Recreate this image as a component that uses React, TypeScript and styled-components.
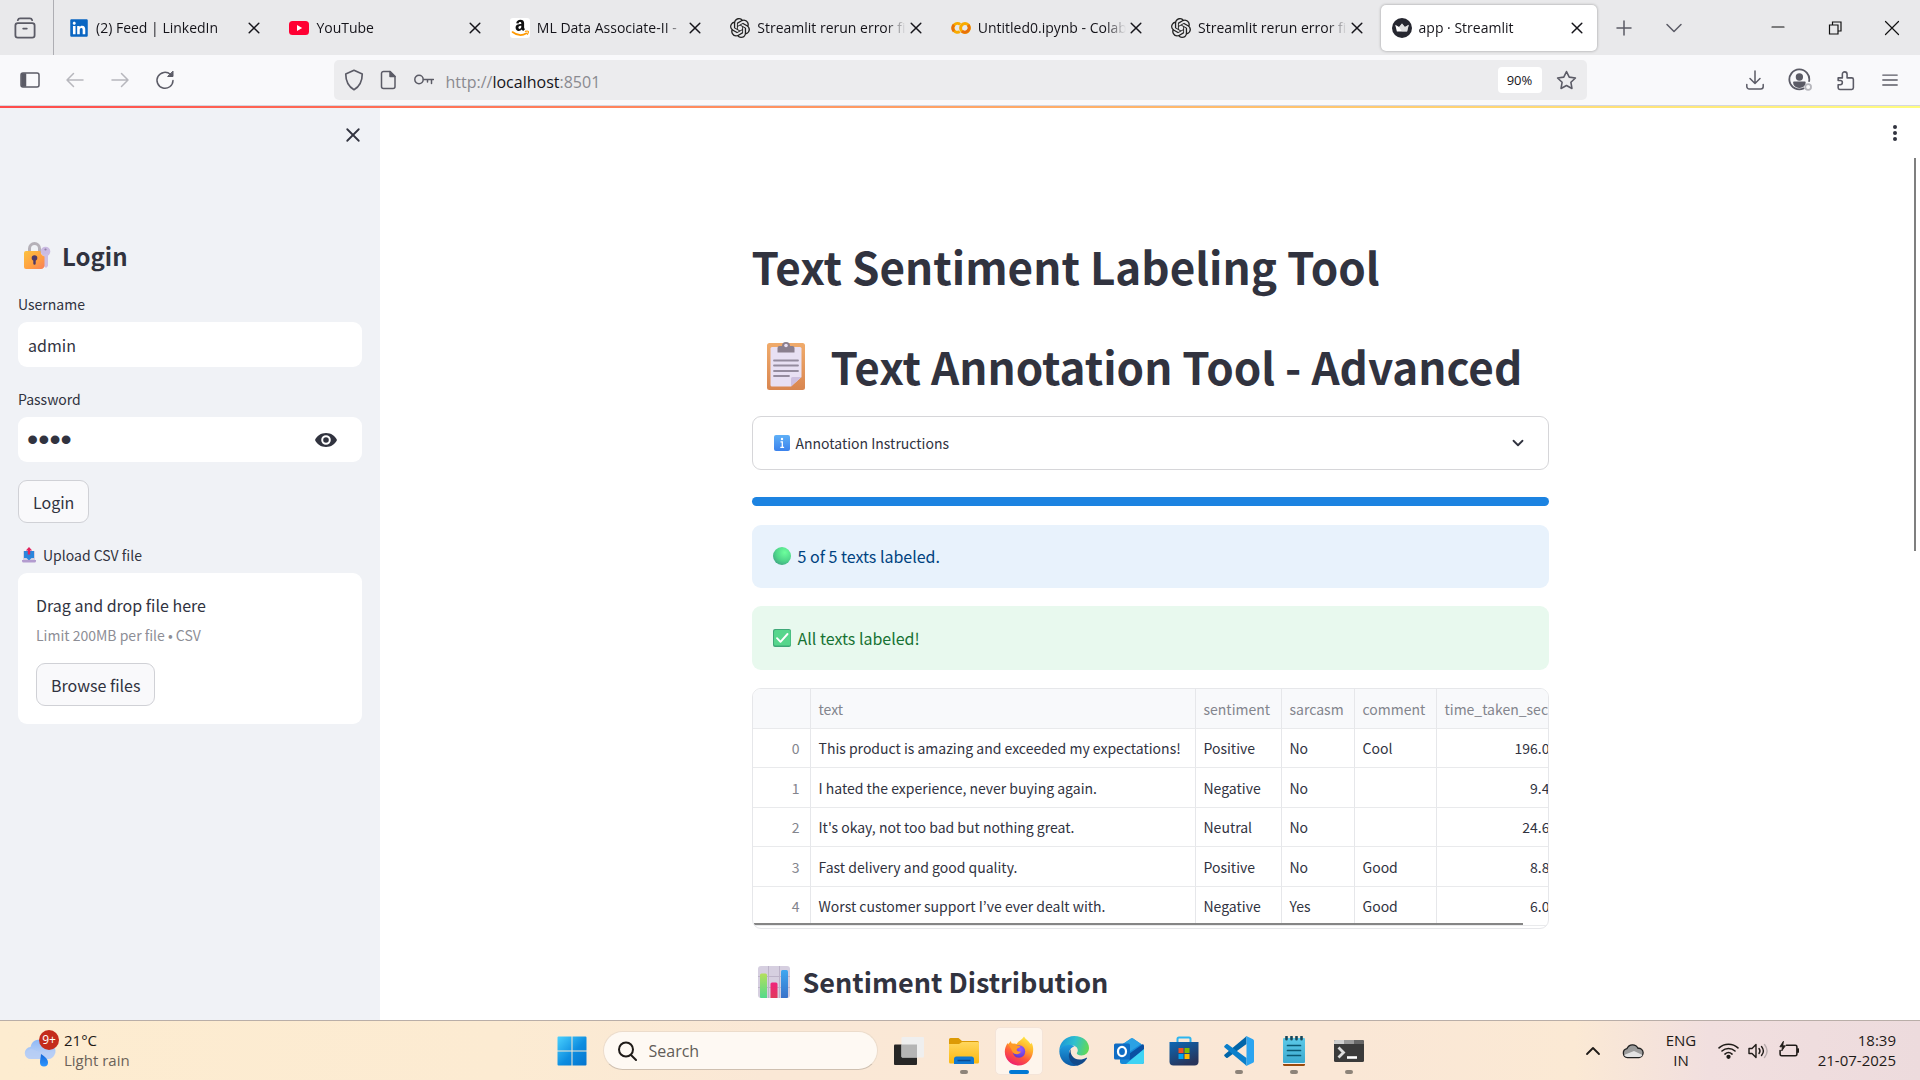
import React from "react";
import styled, { createGlobalStyle, css } from "styled-components";
import { FaLinkedin } from "react-icons/fa";
import { SiOpenai } from "react-icons/si";

const pageFont = `"Noto Sans CJK KR", "Noto Sans", sans-serif`;
const systemFont = `"Open Sans", "Noto Sans", sans-serif`;

const GlobalStyle = createGlobalStyle`
  *, *::before, *::after { box-sizing: border-box; }
  body { margin: 0; font-family: ${pageFont}; color: #31333f; background: #fff; }
  button, input { font: inherit; color: inherit; }
  svg { display: block; flex: none; }
  h1, h2, h3, p { margin: 0; }
`;

/* ---------- shell ---------- */

const Screen = styled.div`
  display: flex;
  flex-direction: column;
  height: 100vh;
  overflow: hidden;
`;

const IconButton = styled.button<{ $width?: number; $height?: number; $color?: string }>`
  display: flex;
  align-items: center;
  justify-content: center;
  flex: none;
  width: ${(p) => p.$width ?? 36}px;
  height: ${(p) => p.$height ?? 36}px;
  padding: 0;
  border: 0;
  background: transparent;
  color: ${(p) => p.$color ?? "#5b5b66"};
`;

/* ---------- tab strip ---------- */

const TabStrip = styled.header`
  display: flex;
  align-items: center;
  height: 55px;
  flex: none;
  background: #e9e9eb;
  font-family: ${systemFont};
`;

const RecentCell = styled.div`
  display: flex;
  align-items: center;
  justify-content: center;
  width: 54px;
  height: 100%;
  padding-right: 4px;
  border-right: 1px solid #aeaeb3;
`;

const TabList = styled.div`
  display: flex;
  gap: 4px;
  padding: 0 2px 0 4px;
  flex: 0 1 1545px;
  min-width: 0;
`;

const Tab = styled.div<{ $active?: boolean }>`
  display: flex;
  align-items: center;
  flex: 1 1 0;
  min-width: 0;
  height: 46px;
  padding: 0 10px 0 11px;
  border-radius: 5px;
  ${(p) =>
    p.$active &&
    css`
      background: #fff;
      box-shadow: 0 0 3px rgba(0, 0, 0, 0.35);
    `}
`;

const TabTitle = styled.span`
  flex: 1;
  min-width: 0;
  margin-left: 7px;
  overflow: hidden;
  white-space: nowrap;
  font-size: 14px;
  line-height: 20px;
  color: #15141a;
  mask-image: linear-gradient(to right, #000 calc(100% - 20px), transparent);
`;

const StripSpacer = styled.div`
  flex: 1;
`;

/* ---------- toolbar ---------- */

const Toolbar = styled.nav`
  display: grid;
  grid-template-columns: 1fr minmax(0, 1253px) 1fr;
  align-items: center;
  height: 51px;
  flex: none;
  background: #f9f9fb;
  border-bottom: 1px solid #d5d7e0;
  font-family: ${systemFont};
`;

const ToolGroup = styled.div<{ $end?: boolean }>`
  display: flex;
  align-items: center;
  gap: 9px;
  padding: 0 12px;
  justify-content: ${(p) => (p.$end ? "flex-end" : "flex-start")};
`;

const AddressBar = styled.div`
  display: flex;
  align-items: center;
  height: 40px;
  padding: 0 2px;
  border-radius: 5px;
  background: #ececee;
`;

const Address = styled.div`
  flex: 1;
  margin-left: 4px;
  padding-top: 3px;
  font-size: 16px;
  line-height: 24px;
  color: #8a8a90;
`;

const Host = styled.span`
  color: #15141a;
`;

const ZoomBadge = styled.button`
  width: 44px;
  height: 26px;
  margin-right: 7px;
  padding: 0;
  border: 0;
  border-radius: 4px;
  background: #fff;
  color: #15141a;
  font-size: 13px;
`;

const Decoration = styled.div`
  height: 2px;
  flex: none;
  background: linear-gradient(90deg, #ff4b4b, #fffd80);
`;

/* ---------- application ---------- */

const Body = styled.div`
  display: flex;
  flex: 1;
  min-height: 0;
`;

const Sidebar = styled.aside`
  width: 380px;
  flex: none;
  padding: 0 18px;
  background: #f0f2f6;
  overflow: hidden;
`;

const SidebarHeader = styled.div`
  display: flex;
  justify-content: flex-end;
  height: 132px;
  padding-top: 9px;
  margin-right: -9px;
`;

const Form = styled.form`
  display: flex;
  flex-direction: column;
  align-items: flex-start;
  gap: 18px;
`;

const SidebarHeading = styled.h2`
  display: flex;
  align-items: center;
  gap: 11px;
  padding-left: 5px;
  font-size: 24px;
  line-height: 32px;
  font-weight: 600;
`;

const Field = styled.div`
  display: flex;
  flex-direction: column;
  gap: 7px;
  width: 100%;
  padding-top: 3px;
`;

const FieldLabel = styled.label`
  display: flex;
  align-items: center;
  gap: 7px;
  font-size: 14px;
  line-height: 22px;
`;

const InputShell = styled.div`
  display: flex;
  align-items: center;
  height: 45px;
  padding-right: 18px;
  border-radius: 9px;
  background: #fff;
`;

const TextInput = styled.input`
  flex: 1;
  min-width: 0;
  height: 100%;
  padding: 0 10px;
  border: 0;
  outline: 0;
  background: transparent;
  font-size: 16px;
  &[type="password"] {
    padding: 0 9px;
    font-family: "Liberation Sans", sans-serif;
    font-size: 32px;
  }
`;

const Button = styled.button`
  height: 43px;
  padding: 0 14px;
  border: 1px solid #d0d1d6;
  border-radius: 9px;
  background: #f9f9fb;
  font-size: 16px;
  line-height: 24px;
`;

const Dropzone = styled.section`
  display: flex;
  flex-direction: column;
  align-items: flex-start;
  padding: 20px 18px 18px;
  border-radius: 9px;
  background: #fff;
`;

const DropTitle = styled.span`
  font-size: 16px;
  line-height: 24px;
`;

const DropHint = styled.small`
  margin: 7px 0 17px;
  font-size: 14px;
  line-height: 22px;
  color: #8d8e96;
`;

const HiddenFile = styled.input`
  display: none;
`;

const Main = styled.main`
  position: relative;
  flex: 1;
  min-width: 0;
  padding: 105px 24px 0;
  overflow: hidden;
`;

const MenuAnchor = styled.div`
  position: absolute;
  top: 7px;
  right: 7px;
`;

const PageScroll = styled.div`
  position: absolute;
  top: 50px;
  right: 4px;
  width: 2px;
  height: 393px;
  background: #7f7f7f;
`;

const Column = styled.div`
  display: flex;
  flex-direction: column;
  gap: 18px;
  max-width: 797px;
  margin: 0 auto;
`;

const Title = styled.h1`
  display: flex;
  align-items: center;
  gap: 25px;
  padding-top: 23px;
  font-size: 44px;
  line-height: 60px;
  font-weight: 700;
  white-space: nowrap;
`;

const Titles = styled.div`
  display: flex;
  flex-direction: column;
  gap: 17px;
  padding-bottom: 2px;
`;

const TitleIcon = styled.span`
  padding-left: 14px;
`;

const Expander = styled.button`
  display: flex;
  align-items: center;
  gap: 6px;
  height: 54px;
  padding: 0 21px;
  border: 1px solid #d6d6d9;
  border-radius: 9px;
  background: #fff;
  font-size: 14px;
  line-height: 22px;
  text-align: left;
`;

const ExpanderLabel = styled.span`
  flex: 1;
`;

const ProgressWrap = styled.div`
  padding: 9px 0 1px;
`;

const ProgressBar = styled.div`
  height: 9px;
  border-radius: 9px;
  background: #1c83e1;
`;

const Alert = styled.div<{ $tone: "info" | "success" }>`
  display: flex;
  align-items: center;
  gap: 7px;
  min-height: ${(p) => (p.$tone === "info" ? 63 : 64)}px;
  padding: 0 21px 1px;
  border-radius: 9px;
  font-size: 16px;
  line-height: 24px;
  background: ${(p) => (p.$tone === "info" ? "#e8f2fc" : "#e8f9ee")};
  color: ${(p) => (p.$tone === "info" ? "#004280" : "#177233")};
`;

const Frame = styled.div`
  position: relative;
  height: 241px;
  border: 1px solid #e6e7ea;
  border-radius: 9px;
  overflow: hidden;
`;

const FrameScroll = styled.div`
  position: absolute;
  left: 1px;
  right: 25px;
  bottom: 3px;
  height: 2px;
  background: #858585;
`;

const Table = styled.table`
  width: 806px;
  table-layout: fixed;
  border-collapse: separate;
  border-spacing: 0;
  font-size: 14px;
  line-height: 20px;
`;

const Row = styled.tr<{ $height: number }>`
  height: ${(p) => p.$height}px;
`;

const Cell = styled.td<{ $align?: "right"; $muted?: boolean }>`
  padding: 0 ${(p) => (p.$muted ? 10 : 8)}px;
  border-right: 1px solid #e6e7ea;
  border-bottom: 1px solid #e9eaec;
  text-align: ${(p) => p.$align ?? "left"};
  white-space: nowrap;
  color: ${(p) => (p.$muted ? "#83858d" : "#31333f")};
`;

const HeadCell = styled(Cell).attrs({ as: "th" })`
  background: #f8f9fb;
  color: #83858d;
  font-weight: 400;
`;

const SectionHeading = styled.h3`
  display: flex;
  align-items: center;
  gap: 13px;
  padding: 16px 0 0 6px;
  font-size: 27px;
  line-height: 38px;
  font-weight: 600;
`;

/* ---------- taskbar ---------- */

const Taskbar = styled.footer`
  display: grid;
  grid-template-columns: 1fr auto 1fr;
  align-items: center;
  height: 60px;
  flex: none;
  border-top: 1px solid #b9aea8;
  background: linear-gradient(90deg, #fdecd0 0%, #fcebd2 26%, #fae8d6 40%, #fae7d6 70%, #fbe9d4 82%, #f1dfdf 89%, #eddbdd 100%);
  font-family: ${systemFont};
  color: #1f1b18;
`;

const Weather = styled.button`
  display: flex;
  align-items: flex-start;
  gap: 7px;
  justify-self: start;
  padding: 0 0 0 24px;
  border: 0;
  background: transparent;
  text-align: left;
`;

const WeatherIcon = styled.span`
  position: relative;
  width: 33px;
  height: 38px;
`;

const Badge = styled.span`
  position: absolute;
  top: 0;
  right: -2px;
  width: 20px;
  height: 20px;
  border-radius: 50%;
  background: #c42b1c;
  color: #fff;
  font-size: 12px;
  line-height: 20px;
  text-align: center;
`;

const Lines = styled.span<{ $align?: string }>`
  display: flex;
  flex-direction: column;
  padding-bottom: 2px;
  font-size: 15px;
  line-height: 20px;
  text-align: ${(p) => p.$align ?? "left"};
`;

const Dim = styled.span`
  color: #6b6259;
`;

const Apps = styled.div`
  display: flex;
  align-items: center;
  gap: 7px;
`;

const AppButton = styled.button<{ $active?: boolean; $running?: boolean }>`
  position: relative;
  display: flex;
  align-items: center;
  justify-content: center;
  width: 48px;
  height: 48px;
  padding: 0;
  border: 1px solid transparent;
  border-radius: 5px;
  background: transparent;
  ${(p) =>
    p.$active &&
    css`
      border-color: #f4e4d8;
      background: #fef5ec;
    `}
  ${(p) =>
    (p.$active || p.$running) &&
    css`
      &::after {
        content: "";
        position: absolute;
        bottom: 0;
        width: ${p.$active ? 20 : 8}px;
        height: 4px;
        border-radius: 2px;
        background: ${p.$active ? "#0078d4" : "#8d8379"};
      }
    `}
`;

const SearchPill = styled.label`
  display: flex;
  align-items: center;
  gap: 12px;
  width: 275px;
  height: 39px;
  padding: 0 13px;
  border: 1px solid #ecdccb;
  border-bottom-color: #cfc0b0;
  border-radius: 20px;
  background: #fef9f3;
`;

const SearchInput = styled.input`
  flex: 1;
  min-width: 0;
  padding: 0;
  border: 0;
  outline: 0;
  background: transparent;
  font-size: 16px;
  &::placeholder {
    color: #625c57;
    opacity: 1;
  }
`;

const Tray = styled.div`
  display: flex;
  align-items: center;
  justify-self: end;
  padding-right: 24px;
`;

const TrayItem = styled.button<{ $width: number; $align?: string }>`
  display: flex;
  align-items: center;
  justify-content: ${(p) => (p.$align === "right" ? "flex-end" : "center")};
  width: ${(p) => p.$width}px;
  height: 48px;
  padding: 0;
  border: 0;
  background: transparent;
`;

/* ---------- line icons ---------- */

const Line = ({ size = 20, w = 1.5, children }: { size?: number; w?: number; children: React.ReactNode }) => (
  <svg width={size} height={size} viewBox="0 0 20 20" fill="none" stroke="currentColor" strokeWidth={w} strokeLinecap="round" strokeLinejoin="round">
    {children}
  </svg>
);

const CloseIcon = ({ size = 20, w = 1.5 }) => (
  <Line size={size} w={w}><path d="M5.2 5.2l9.6 9.6M14.8 5.2l-9.6 9.6" /></Line>
);

/* ---------- picture icons ---------- */

const YoutubeLogo = () => (
  <svg width="20" height="20" viewBox="0 0 20 20">
    <rect y="3" width="20" height="14" rx="3.5" fill="#ff0033" />
    <path d="M8 7l5.2 3L8 13z" fill="#fff" />
  </svg>
);

const LinkedInLogo = () => (
  <svg width="20" height="20" viewBox="0 0 20 20">
    <rect x="2" y="2" width="16" height="16" fill="#fff" />
    <FaLinkedin x="0" y="0" width={20} height={20} size={20} color="#0a66c2" />
  </svg>
);

const AmazonLogo = () => (
  <svg width="20" height="20" viewBox="0 0 20 20">
    <rect width="20" height="20" rx="3" fill="#fff" />
    <path d="M6.2 5.2c.3-2.200 2-3.400 4.200-3.400 2.400 0 3.700 1.200 3.700 3.300v4.200c0 .9.300 1.300.9 2l-1.900 1.600c-.6-.4-1-.9-1.300-1.400-.8.900-1.700 1.400-3 1.400-1.900 0-3.200-1.200-3.200-3.100 0-2.700 2.200-3.700 5.700-3.700V5.400c0-.9-.4-1.400-1.200-1.400-.8 0-1.300.4-1.500 1.400zM11.300 7.800c-1.900 0-2.900.5-2.900 1.800 0 .8.500 1.300 1.200 1.300 1.100 0 1.700-1 1.700-2.300z" fill="#111" />
    <path d="M2.500 14c4.600 3.600 9.600 4 14 1.300" fill="none" stroke="#ff9900" strokeWidth="1.600" strokeLinecap="round" />
    <path d="M15.400 13.300c1.200-.3 2.500-.4 2.900 0 .3.600-.1 1.900-.8 3" fill="none" stroke="#ff9900" strokeWidth="1.200" strokeLinecap="round" />
  </svg>
);

const ColabLogo = () => (
  <svg width="20" height="20" viewBox="0 0 20 20" fill="none" strokeWidth="3">
    <path d="M9.200 6.400A4.400 4.400 0 1 0 8.800 13.600" stroke="#f9ab00" />
    <path d="M3 13.100A4.400 4.400 0 0 1 3 6.900" stroke="#e8710a" />
    <circle cx="14" cy="10" r="4.400" stroke="#f9ab00" />
    <path d="M17.100 6.900A4.400 4.400 0 0 1 10.900 13.100" stroke="#e8710a" />
  </svg>
);

const CrownLogo = () => (
  <svg width="20" height="20" viewBox="0 0 20 20">
    <circle cx="10" cy="10" r="10" fill="#262730" />
    <path d="M3.200 6.800l3.900 2.300L10 5.400l2.900 3.700 3.900-2.300-1.700 6.700H4.900z" fill="#fff" />
    <path d="M10 5.400l2.900 3.700 3.900-2.300-1.700 6.700H10l-3-4.400z" fill="#c9c9cc" opacity=".6" />
  </svg>
);

const LockKeyIcon = () => (
  <svg width="28" height="28" viewBox="0 0 28 28">
    <defs>
      <linearGradient id="lockBody" x1="0" y1="0" x2="1" y2="1">
        <stop offset="0" stopColor="#fcc23f" /><stop offset=".6" stopColor="#ff9e42" /><stop offset="1" stopColor="#f77f5b" />
      </linearGradient>
    </defs>
    <circle cx="22.500" cy="9.500" r="4.800" fill="#cbbbe2" />
    <circle cx="22.500" cy="7.500" r="1.100" fill="#8f80a8" />
    <path d="M21 12h4v12l-2 2-2-2z" fill="#cdbfe3" />
    <path d="M6.500 11V6.500a5 5 0 0 1 10 0V11" fill="none" stroke="#b5b1b8" strokeWidth="3" />
    <path d="M3 9h14.500c0 3 1.500 4.500 4 5.500V23a3.500 3.500 0 0 1-3.500 4H3a2 2 0 0 1-2-2V11a2 2 0 0 1 2-2z" fill="url(#lockBody)" />
    <circle cx="11.500" cy="16" r="2.800" fill="#4d3a68" />
    <path d="M10.300 17h2.400v4.500a1.200 1.200 0 0 1-2.400 0z" fill="#4d3a68" />
  </svg>
);

const UploadTrayIcon = () => (
  <svg width="14" height="16" viewBox="0 0 14 16">
    <path d="M1 4h12v9H1z" fill="#d5cfe0" />
    <path d="M2 4h10v7H9.500L7.500 13h-1l-2-2H2z" fill="#2a86dc" />
    <path d="M0 13h14v1a1.500 1.500 0 0 1-1.500 1.500h-11A1.500 1.500 0 0 1 0 14z" fill="#b39ccf" />
    <path d="M7 0l3.200 3.600H8.200V7.500H5.800V3.600H3.800z" fill="#e0245e" />
  </svg>
);

const ClipboardIcon = () => (
  <svg width="40" height="50" viewBox="0 0 40 50">
    <defs>
      <linearGradient id="board" x1="0" y1="0" x2="0" y2="1">
        <stop offset="0" stopColor="#f0ab6b" /><stop offset="1" stopColor="#d98650" />
      </linearGradient>
    </defs>
    <rect x="1" y="2" width="38" height="47" rx="2.500" fill="url(#board)" />
    <path d="M6 6h28a1.500 1.500 0 0 1 1.500 1.500V36L25 45.500H6A1.500 1.500 0 0 1 4.500 44V7.500A1.500 1.500 0 0 1 6 6z" fill="#e8e0f3" />
    <path d="M25 45.500V37.500A1.500 1.500 0 0 1 26.500 36h9z" fill="#cdbfdf" />
    <path d="M11.500 11.500V7a2 2 0 0 1 2-2H16a4 4 0 0 1 8 0h2.500a2 2 0 0 1 2 2v4.500z" fill="#8a7f8e" />
    <circle cx="20" cy="4.500" r="1.800" fill="#e8e0f3" />
    <path d="M8 19.500h24M8 24.500h24M8 30h24M8 35h15" stroke="#948b9e" strokeWidth="1.800" strokeLinecap="round" />
  </svg>
);

const InfoIcon = () => (
  <svg width="16" height="16" viewBox="0 0 16 16">
    <defs>
      <linearGradient id="infoFill" x1="0" y1="0" x2="0" y2="1">
        <stop offset="0" stopColor="#5fb0f7" /><stop offset="1" stopColor="#3b82ec" />
      </linearGradient>
    </defs>
    <rect width="16" height="16" rx="2" fill="url(#infoFill)" />
    <circle cx="8" cy="4" r="1.200" fill="#fff" />
    <path d="M6.500 6.800H8.300V12M6.300 12.300h3.800" fill="none" stroke="#fff" strokeWidth="1.300" />
  </svg>
);

const GreenCircleIcon = () => (
  <svg width="18" height="18" viewBox="0 0 18 18">
    <defs>
      <radialGradient id="ball" cx=".65" cy=".3" r=".8">
        <stop offset="0" stopColor="#6dff9c" /><stop offset=".6" stopColor="#4fd58a" /><stop offset="1" stopColor="#3fa283" />
      </radialGradient>
    </defs>
    <circle cx="9" cy="9" r="9" fill="url(#ball)" />
  </svg>
);

const CheckMarkIcon = () => (
  <svg width="18" height="18" viewBox="0 0 18 18">
    <rect width="18" height="18" rx="2" fill="#3fa878" />
    <rect x="1" y="1" width="16.500" height="15.500" rx="1.500" fill="#57d68c" />
    <path d="M4 9.200l3.500 3.600L14.500 5" fill="none" stroke="#fff" strokeWidth="1.900" strokeLinecap="round" strokeLinejoin="round" />
  </svg>
);

const ChartIcon = () => (
  <svg width="32" height="32" viewBox="0 0 32 32">
    <defs>
      <linearGradient id="barGreen" x1="0" y1="0" x2="0" y2="1"><stop offset="0" stopColor="#b4e05c" /><stop offset="1" stopColor="#54d98c" /></linearGradient>
      <linearGradient id="barRed" x1="0" y1="0" x2="0" y2="1"><stop offset="0" stopColor="#f0247c" /><stop offset="1" stopColor="#e03b5c" /></linearGradient>
      <linearGradient id="barBlue" x1="0" y1="0" x2="0" y2="1"><stop offset="0" stopColor="#3fa7f0" /><stop offset="1" stopColor="#3a72c9" /></linearGradient>
    </defs>
    <rect width="32" height="32" rx="3" fill="#d6cfe0" />
    <path d="M10.500 0v32M21.500 0v32M0 10.500h32M0 21.500h32" stroke="#bdb3c9" strokeWidth="1" />
    <path d="M2 9a1.500 1.500 0 0 1 1.500-1.500h4A1.500 1.500 0 0 1 9 9v23H3a1 1 0 0 1-1-1z" fill="url(#barGreen)" />
    <path d="M12.500 18A1.500 1.500 0 0 1 14 16.500h4a1.500 1.500 0 0 1 1.500 1.500v14h-7z" fill="url(#barRed)" />
    <path d="M23 5.500A1.500 1.500 0 0 1 24.500 4h4A1.500 1.500 0 0 1 30 5.500V31a1 1 0 0 1-1 1h-6z" fill="url(#barBlue)" />
  </svg>
);

const WeatherPicture = () => (
  <svg width="33" height="38" viewBox="0 0 33 38">
    <defs>
      <linearGradient id="cloud" x1="0" y1="0" x2="0" y2="1"><stop offset="0" stopColor="#8db8f7" /><stop offset="1" stopColor="#c9d8f5" /></linearGradient>
      <linearGradient id="drop" x1="0" y1="0" x2="0" y2="1"><stop offset="0" stopColor="#1467d8" /><stop offset="1" stopColor="#2f97ff" /></linearGradient>
    </defs>
    <path d="M7 29a6 6 0 0 1-.5-12A9 9 0 0 1 23 14a7.500 7.500 0 0 1 2 15z" fill="url(#cloud)" />
    <path d="M1.500 25a6 6 0 0 1 8-5.500c3 1.200 5 2.500 9 2.500 5 0 9 0 11.500-1 .5 5-2 8-5.500 8H7a6 6 0 0 1-5.500-4z" fill="#b7cdf5" opacity=".8" />
    <path d="M17 24c4 3 7 5 7 8.500a4 4 0 0 1-8 0c0-3 .8-5 1-8.500z" fill="url(#drop)" />
  </svg>
);

const WindowsLogo = () => (
  <svg width="30" height="30" viewBox="0 0 30 30">
    <defs>
      <linearGradient id="win" gradientUnits="userSpaceOnUse" x1="0" y1="0" x2="30" y2="30"><stop offset="0" stopColor="#4cd3ff" /><stop offset=".55" stopColor="#0d8de0" /><stop offset="1" stopColor="#0573cd" /></linearGradient>
    </defs>
    <path d="M1.500 .5h13v14H.5v-13a1 1 0 0 1 1-1zM15.500 .5h13a1 1 0 0 1 1 1v13h-14zM.5 15.500h14v14h-13a1 1 0 0 1-1-1zM15.500 15.500h14v13a1 1 0 0 1-1 1h-13z" fill="url(#win)" />
  </svg>
);

const TaskViewIcon = () => (
  <svg width="30" height="30" viewBox="0 0 30 30">
    <rect x="0" y="8.500" width="23" height="20.500" rx="1" fill="#262626" />
    <rect x="7.500" y="1" width="22.500" height="20.500" rx="1" fill="#efefef" />
    <path d="M7.500 8.500H23v13H8.500a1 1 0 0 1-1-1z" fill="#b5b5b5" />
  </svg>
);

const FolderIcon = () => (
  <svg width="30" height="30" viewBox="0 0 30 30">
    <defs><linearGradient id="folder" x1="0" y1="0" x2="0" y2="1"><stop offset="0" stopColor="#ffd75e" /><stop offset="1" stopColor="#fbb80f" /></linearGradient></defs>
    <path d="M0 3.500A1.500 1.500 0 0 1 1.500 2h8L13 5h15.500A1.500 1.500 0 0 1 30 6.500V10H0z" fill="#dc9a05" />
    <path d="M0 8h10l3-2h16a1 1 0 0 1 1 1v19a1.500 1.500 0 0 1-1.500 1.500h-27A1.500 1.500 0 0 1 0 26z" fill="url(#folder)" />
    <path d="M5 28v-5a2.500 2.500 0 0 1 2.500-2.500h15A2.500 2.500 0 0 1 25 23v5z" fill="#1078d1" />
    <path d="M8.500 24.500h13" stroke="#0b4a8f" strokeWidth="1.500" />
  </svg>
);

const FirefoxLogo = () => (
  <svg width="30" height="30" viewBox="0 0 30 30">
    <defs>
      <linearGradient id="fox" x1=".8" y1="0" x2=".3" y2="1"><stop offset="0" stopColor="#fff04a" /><stop offset=".35" stopColor="#ffb12a" /><stop offset=".65" stopColor="#ff5a3a" /><stop offset="1" stopColor="#ee1c70" /></linearGradient>
      <radialGradient id="globe" cx=".6" cy=".3" r=".8"><stop offset="0" stopColor="#9a5cff" /><stop offset="1" stopColor="#5a34c9" /></radialGradient>
    </defs>
    <path d="M20 .5c1.500 3 4.500 4 6.500 7.500.7-.2 1-.8 1-1.500C29 9.500 29.500 12 29 16c-.8 7.600-7 13.500-14.200 13.500C7 29.500.8 23.500.8 15.800c0-3.500 1.200-6.500 3-8.800l.4 1.500L6.800 5l1 3c1.500-.8 3.500-.8 5 0C14 5 17.500 4.500 20 .5z" fill="url(#fox)" />
    <circle cx="15" cy="15.500" r="6.200" fill="url(#globe)" />
    <path d="M4 8c3-1 6-.5 8 1.500 2 .2 3.500.2 4.500 1-1 1.500-3.500 1.500-4 3.500 1 1.500 2.500 1.800 4.500 1.500-1.500 3.500-6.500 3.500-8.500.5C7 13 6 10 4 8z" fill="#ff9a26" />
  </svg>
);

const EdgeLogo = () => (
  <svg width="30" height="30" viewBox="0 0 30 30">
    <defs>
      <linearGradient id="edgeTop" x1="0" y1=".3" x2="1" y2=".5"><stop offset="0" stopColor="#1b94d8" /><stop offset=".5" stopColor="#2fc0cf" /><stop offset="1" stopColor="#62d957" /></linearGradient>
      <linearGradient id="edgeSide" x1="0" y1="0" x2="0" y2="1"><stop offset="0" stopColor="#1f9de0" /><stop offset="1" stopColor="#0c59a4" /></linearGradient>
    </defs>
    <path d="M.3 15C.3 6.500 7 0 15.300 0 24 0 30 5.500 30 12c0 4.500-3.500 7.500-7.500 7.500-3 0-4.700-1-4.700-2.200 0-.8 1-1.200 1-3 0-3-3-5-6.800-5C6 9.300 1.500 12 .3 15z" fill="url(#edgeTop)" />
    <path d="M.3 15C1.500 10.500 6.500 8.500 11 8.800c2 .1 3.500.8 4.500 1.700-3.500.5-5.500 4-5.500 7.500 0 5 4 10.500 9.500 11.300-1.500.5-3 .7-4.500.7C6.500 30 .3 23.500.3 15z" fill="url(#edgeSide)" />
    <path d="M12 13c-1.500 4 1.500 10.500 8.500 10.500 3 0 5-.8 6.800-1.800.6-.2 1 .3.600.9C25.500 26.500 22 29 19 29.400 12.500 29 9 23 10 18c.3-2 1-3.800 2-5z" fill="#114a8b" />
  </svg>
);

const OutlookLogo = () => (
  <svg width="30" height="30" viewBox="0 0 30 30">
    <path d="M6 10L17 2.500a2 2 0 0 1 2 0L30 10v16a2 2 0 0 1-2 2H8a2 2 0 0 1-2-2z" fill="#1689d8" />
    <path d="M6 10L17 2.500a2 2 0 0 1 2 0L27 8 12 18z" fill="#2ba1e4" />
    <path d="M12 20L29 8l1 1.500V14L16 24z" fill="#0a4fa3" />
    <path d="M30 13v13a2 2 0 0 1-2 2H12z" fill="#3fd3f4" />
    <rect x="0" y="7.500" width="16" height="16" rx="1.500" fill="#0f6cc4" />
    <ellipse cx="8" cy="15.500" rx="4" ry="4.600" fill="none" stroke="#fff" strokeWidth="2.200" />
  </svg>
);

const StoreLogo = () => (
  <svg width="30" height="30" viewBox="0 0 30 30">
    <defs><linearGradient id="bag" x1="0" y1="0" x2=".5" y2="1"><stop offset="0" stopColor="#0c68b5" /><stop offset="1" stopColor="#27355c" /></linearGradient></defs>
    <path d="M8.500 7V3a1.500 1.500 0 0 1 1.500-1.500h10A1.500 1.500 0 0 1 21.500 3v4" fill="none" stroke="#2cb5ef" strokeWidth="2" />
    <path d="M.5 6h29v19.500a4 4 0 0 1-4 4h-21a4 4 0 0 1-4-4z" fill="url(#bag)" />
    <path d="M9.500 12h5v5h-5z" fill="#f25022" /><path d="M15.500 12h5v5h-5z" fill="#7fba00" />
    <path d="M9.500 18h5v5h-5z" fill="#00a4ef" /><path d="M15.500 18h5v5h-5z" fill="#ffb900" />
  </svg>
);

const CodeLogo = () => (
  <svg width="30" height="30" viewBox="0 0 30 30">
    <path d="M22.500.3L.6 18.600c-.6.500-.6 1.200 0 1.700l1.600 1.500c.5.400 1 .4 1.500 0L22.500 8z" fill="#0065a9" />
    <path d="M22.500 29.700L.6 11.400c-.6-.5-.6-1.200 0-1.700l1.600-1.500c.5-.4 1-.4 1.500 0L22.500 22z" fill="#0a7fcb" />
    <path d="M21.500.2c.4-.3.900-.2 1.300 0L29 3.200c.6.300 1 .9 1 1.600v20.400c0 .7-.4 1.300-1 1.600l-6.200 3c-.4.200-.9.300-1.300 0 .6.100 1-.3 1-.9V1.100c0-.6-.4-1-1-.9z" fill="#2ba4f0" />
  </svg>
);

const NotepadLogo = () => (
  <svg width="22" height="30" viewBox="0 0 22 30">
    <defs><linearGradient id="pad" x1="0" y1="0" x2="0" y2="1"><stop offset="0" stopColor="#5cc9e8" /><stop offset="1" stopColor="#3ba9cf" /></linearGradient></defs>
    <path d="M0 25h22v3.500a1.500 1.500 0 0 1-1.500 1.500h-19A1.500 1.500 0 0 1 0 28.500z" fill="#9a4a0c" />
    <path d="M0 25h22v3H0z" fill="#f2efec" />
    <rect y="2" width="22" height="25" rx="1" fill="url(#pad)" />
    <path d="M4.500 9.500h13M4.500 14.500h13M4.500 19.500h13" stroke="#0b5873" strokeWidth="1.700" strokeLinecap="round" />
    <path d="M3.500 .8v2.500M8.500 .8v2.500M13.500 .8v2.500M18.500 .8v2.500" stroke="#17475a" strokeWidth="2.600" strokeLinecap="round" />
  </svg>
);

const TerminalLogo = () => (
  <svg width="30" height="30" viewBox="0 0 30 30">
    <rect y="4" width="30" height="22" rx="1.500" fill="#3a3a3a" />
    <path d="M0 8V5.500A1.500 1.500 0 0 1 1.500 4H10v4z" fill="#cfcfcf" /><path d="M10 4h10v4H10z" fill="#999" /><path d="M20 4h8.500A1.500 1.500 0 0 1 30 5.500V8H20z" fill="#666" />
    <path d="M4.500 11.500l5 5-5 5" fill="none" stroke="#dcdcdc" strokeWidth="2.800" />
    <path d="M13 21.500h10" stroke="#fff" strokeWidth="2.600" />
  </svg>
);

/* ---------- data ---------- */

const tabs = [
  { title: "(2) Feed | LinkedIn", icon: <LinkedInLogo /> },
  { title: "YouTube", icon: <YoutubeLogo /> },
  { title: "ML Data Associate-II -", icon: <AmazonLogo /> },
  { title: "Streamlit rerun error fix", icon: <SiOpenai size={20} color="#222" /> },
  { title: "Untitled0.ipynb - Colab", icon: <ColabLogo /> },
  { title: "Streamlit rerun error fix", icon: <SiOpenai size={20} color="#222" /> },
  { title: "app · Streamlit", icon: <CrownLogo />, active: true },
];

const columns = [
  { name: "", width: 58 },
  { name: "text", width: 385 },
  { name: "sentiment", width: 86 },
  { name: "sarcasm", width: 73 },
  { name: "comment", width: 82 },
  { name: "time_taken_sec", width: 122 },
];

const rows = [
  ["This product is amazing and exceeded my expectations!", "Positive", "No", "Cool", "196.0"],
  ["I hated the experience, never buying again.", "Negative", "No", "", "9.4"],
  ["It's okay, not too bad but nothing great.", "Neutral", "No", "", "24.6"],
  ["Fast delivery and good quality.", "Positive", "No", "Good", "8.8"],
  ["Worst customer support I’ve ever dealt with.", "Negative", "Yes", "Good", "6.0"],
];

const apps = [
  { name: "Task View", icon: <TaskViewIcon /> },
  { name: "File Explorer", icon: <FolderIcon />, running: true },
  { name: "Firefox", icon: <FirefoxLogo />, active: true },
  { name: "Edge", icon: <EdgeLogo /> },
  { name: "Outlook", icon: <OutlookLogo /> },
  { name: "Store", icon: <StoreLogo /> },
  { name: "Visual Studio Code", icon: <CodeLogo />, running: true },
  { name: "Notepad", icon: <NotepadLogo />, running: true },
  { name: "Terminal", icon: <TerminalLogo />, running: true },
];

const ColumnWidth = styled.col<{ $width: number }>`
  width: ${(p) => p.$width}px;
`;

/* ---------- sections ---------- */

function BrowserChrome() {
  return (
    <>
      <TabStrip>
        <RecentCell>
          <IconButton aria-label="Recent browsing">
            <Line size={24} w={1.5}>
              <rect x="2" y="6" width="16" height="12" rx="2" />
              <path d="M4 3.500C4.300 2.500 5 2 6 2h8c1 0 1.700.5 2 1.500M8.500 10.500h3" />
            </Line>
          </IconButton>
        </RecentCell>
        <TabList>
          {tabs.map((tab, i) => (
            <Tab key={i} $active={tab.active}>
              {tab.icon}
              <TabTitle>{tab.title}</TabTitle>
              <IconButton $width={20} $height={28} $color="#15141a" aria-label="Close tab">
                <CloseIcon size={20} />
              </IconButton>
            </Tab>
          ))}
        </TabList>
        <IconButton $width={50} aria-label="New tab">
          <Line size={20}><path d="M3 10h14M10 3v14" /></Line>
        </IconButton>
        <IconButton $width={50} aria-label="List all tabs">
          <Line size={20}><path d="M3 6.500l7 7 7-7" /></Line>
        </IconButton>
        <StripSpacer />
        <IconButton $width={57} $color="#111" aria-label="Minimize">
          <Line size={20} w={1.2}><path d="M4 9h12" /></Line>
        </IconButton>
        <IconButton $width={57} $color="#111" aria-label="Restore">
          <Line size={20} w={1.2}>
            <path d="M4.500 7h8.500v9H4.500zM7.500 7V4H16v9h-3" strokeLinejoin="miter" />
          </Line>
        </IconButton>
        <IconButton $width={57} $color="#111" aria-label="Close window">
          <Line size={20} w={1.2}><path d="M3.500 3.500l13 13M16.500 3.500l-13 13" /></Line>
        </IconButton>
      </TabStrip>

      <Toolbar>
        <ToolGroup>
          <IconButton aria-label="Sidebars">
            <Line size={20}>
              <rect x="1" y="3" width="18" height="14" rx="2" />
              <path d="M2 4h3.500v12H2z" fill="currentColor" />
            </Line>
          </IconButton>
          <IconButton $color="#b7b7bd" aria-label="Back">
            <Line size={20}><path d="M18 10H2.500M8.500 3.500L2 10l6.500 6.500" /></Line>
          </IconButton>
          <IconButton $color="#b7b7bd" aria-label="Forward">
            <Line size={20}><path d="M2 10h15.500M11.500 3.500L18 10l-6.500 6.500" /></Line>
          </IconButton>
          <IconButton aria-label="Reload">
            <Line size={20}>
              <path d="M18 10.500A8 8 0 1 1 15.500 4.500" />
              <path d="M18 1.500v5h-5z" fill="currentColor" strokeWidth="1" />
            </Line>
          </IconButton>
        </ToolGroup>
        <AddressBar>
          <IconButton aria-label="Tracking protection">
            <Line size={22}><path d="M10 1.200l7.500 3.300c0 6-1.800 11-7.500 14.300C4.300 15.500 2.500 10.500 2.500 4.500z" /></Line>
          </IconButton>
          <IconButton $width={34} aria-label="Site information">
            <Line size={20}>
              <path d="M4.500 1.500H11l5 5v10a2 2 0 0 1-2 2H4.500a2 2 0 0 1-2-2v-13a2 2 0 0 1 2-2z" />
              <path d="M11 1.500v5h5z" fill="currentColor" />
            </Line>
          </IconButton>
          <IconButton aria-label="Saved password">
            <Line size={20}><circle cx="5" cy="9.500" r="4.200" /><path d="M9.500 9.500h10M13.500 9.500v2.500M17.500 9.500v4" /></Line>
          </IconButton>
          <Address>http://<Host>localhost</Host>:8501</Address>
          <ZoomBadge>90%</ZoomBadge>
          <IconButton aria-label="Bookmark this page">
            <Line size={21}><path d="M10 1.500l2.600 5.300 5.900.8-4.300 4.100 1 5.900L10 14.800l-5.200 2.800 1-5.900L1.500 7.600l5.900-.8z" /></Line>
          </IconButton>
        </AddressBar>
        <ToolGroup $end>
          <IconButton aria-label="Downloads">
            <Line size={20}><path d="M10 1v12M5 8.500l5 5 5-5M1.800 14.500v2a2.500 2.500 0 0 0 2.500 2.500h11.400a2.500 2.500 0 0 0 2.500-2.500v-2" /></Line>
          </IconButton>
          <IconButton aria-label="Account">
            <Line size={24}>
              <path d="M13 17A8.300 8.300 0 1 1 17.600 11" />
              <circle cx="9.500" cy="7.500" r="2.300" fill="currentColor" />
              <path d="M5 12h9c0 2.500-2 4-4.500 4S5 14.500 5 12z" fill="currentColor" />
              <circle cx="16.800" cy="15.800" r="2.400" stroke="#b7b7bd" />
            </Line>
          </IconButton>
          <IconButton aria-label="Extensions">
            <Line size={21}><path d="M3 7.500h4V4a2 2 0 0 1 4.500 0v3.500H16a1.500 1.500 0 0 1 1.500 1.500v8a1.500 1.500 0 0 1-1.500 1.500H4.500A1.500 1.500 0 0 1 3 17v-3h2a2 2 0 0 0 0-4H3z" /></Line>
          </IconButton>
          <IconButton aria-label="Menu">
            <Line size={18}><path d="M2 4.500h16M2 10h16M2 15.500h16" /></Line>
          </IconButton>
        </ToolGroup>
      </Toolbar>
      <Decoration />
    </>
  );
}

const UploadIconWrap = styled.span`
  padding-left: 4px;
`;

function LoginSidebar() {
  return (
    <Sidebar>
      <SidebarHeader>
        <IconButton $color="#31333f" aria-label="Collapse sidebar">
          <CloseIcon size={24} w={1.5} />
        </IconButton>
      </SidebarHeader>
      <Form onSubmit={(e) => e.preventDefault()}>
        <SidebarHeading><LockKeyIcon />Login</SidebarHeading>
        <Field>
          <FieldLabel htmlFor="username">Username</FieldLabel>
          <InputShell><TextInput id="username" defaultValue="admin" /></InputShell>
        </Field>
        <Field>
          <FieldLabel htmlFor="password">Password</FieldLabel>
          <InputShell>
            <TextInput id="password" type="password" defaultValue="1234" />
            <IconButton aria-label="Show password" $color="#31333f">
              <svg width="22" height="22" viewBox="0 0 22 22" fill="currentColor" fillRule="evenodd">
                <path d="M11 4C6 4 1.800 6.800 0 11c1.800 4.200 6 7 11 7s9.200-2.800 11-7c-1.800-4.200-6-7-11-7zm0 11.800a4.800 4.800 0 1 1 0-9.600 4.800 4.800 0 0 1 0 9.600zM11 8.200a2.800 2.800 0 1 0 0 5.600 2.800 2.800 0 0 0 0-5.600z" />
              </svg>
            </IconButton>
          </InputShell>
        </Field>
        <Button type="submit">Login</Button>
        <Field>
          <FieldLabel htmlFor="csv"><UploadIconWrap><UploadTrayIcon /></UploadIconWrap>Upload CSV file</FieldLabel>
          <Dropzone>
            <DropTitle>Drag and drop file here</DropTitle>
            <DropHint>Limit 200MB per file • CSV</DropHint>
            <HiddenFile id="csv" type="file" accept=".csv" />
            <Button type="button">Browse files</Button>
          </Dropzone>
        </Field>
      </Form>
    </Sidebar>
  );
}

function Annotations() {
  return (
    <Main>
      <MenuAnchor>
        <IconButton aria-label="Main menu" $color="#31333f">
          <svg width="6" height="18" viewBox="0 0 6 18" fill="currentColor">
            <circle cx="3" cy="3" r="2" /><circle cx="3" cy="9" r="2" /><circle cx="3" cy="15" r="2" />
          </svg>
        </IconButton>
      </MenuAnchor>
      <PageScroll />
      <Column>
        <Titles>
          <Title>Text Sentiment Labeling Tool</Title>
          <Title><TitleIcon><ClipboardIcon /></TitleIcon>Text Annotation Tool - Advanced</Title>
        </Titles>
        <Expander aria-expanded={false}>
          <InfoIcon />
          <ExpanderLabel>Annotation Instructions</ExpanderLabel>
          <Line size={18} w={2}><path d="M5 7.500l5 5 5-5" /></Line>
        </Expander>
        <ProgressWrap>
          <ProgressBar role="progressbar" aria-valuenow={100} />
        </ProgressWrap>
        <Alert $tone="info"><GreenCircleIcon />5 of 5 texts labeled.</Alert>
        <Alert $tone="success"><CheckMarkIcon />All texts labeled!</Alert>
        <Frame>
          <Table>
            <colgroup>
              {columns.map((c, i) => <ColumnWidth key={i} $width={c.width} />)}
            </colgroup>
            <thead>
              <Row $height={40}>{columns.map((c, i) => <HeadCell key={i}>{c.name}</HeadCell>)}</Row>
            </thead>
            <tbody>
              {rows.map((row, r) => (
                <Row key={r} $height={r % 2 ? 40 : 39}>
                  <Cell $align="right" $muted>{r}</Cell>
                  {row.map((value, c) => (
                    <Cell key={c} $align={c === 4 ? "right" : undefined}>{value}</Cell>
                  ))}
                </Row>
              ))}
            </tbody>
          </Table>
          <FrameScroll />
        </Frame>
        <SectionHeading><ChartIcon />Sentiment Distribution</SectionHeading>
      </Column>
    </Main>
  );
}

function SystemTaskbar() {
  return (
    <Taskbar>
      <Weather>
        <WeatherIcon><WeatherPicture /><Badge>9+</Badge></WeatherIcon>
        <Lines><span>21°C</span><Dim>Light rain</Dim></Lines>
      </Weather>
      <Apps>
        <AppButton aria-label="Start"><WindowsLogo /></AppButton>
        <SearchPill>
          <Line size={20} w={2}><circle cx="9" cy="8.500" r="7" /><path d="M14 14l5 5" /></Line>
          <SearchInput placeholder="Search" aria-label="Search" />
        </SearchPill>
        {apps.map((app) => (
          <AppButton key={app.name} aria-label={app.name} $active={app.active} $running={app.running}>
            {app.icon}
          </AppButton>
        ))}
      </Apps>
      <Tray>
        <TrayItem $width={40} aria-label="Hidden icons">
          <Line size={20} w={1.800}><path d="M4 13l6-6 6 6" /></Line>
        </TrayItem>
        <TrayItem $width={40} aria-label="OneDrive">
          <svg width="22" height="16" viewBox="0 0 22 16">
            <path d="M5.500 14.500a4.500 4.500 0 0 1-.5-8.900A6 6 0 0 1 16 5.300a4.600 4.600 0 0 1 1 9.200z" fill="#9b9b9b" stroke="#222" strokeWidth="1.300" />
            <path d="M2 12l10-4 8.500 4c-.6 1.200-1.700 1.900-3.500 1.900H5.500C4 13.900 2.800 13.300 2 12z" fill="#e3e3e3" />
          </svg>
        </TrayItem>
        <TrayItem $width={56}><Lines $align="center"><span>ENG</span><span>IN</span></Lines></TrayItem>
        <TrayItem $width={38} aria-label="Network">
          <Line size={21} w={1.500}>
            <path d="M1 7.500c5-4.700 13-4.700 18 0M3.800 10.500c3.500-3.200 8.900-3.200 12.400 0M6.600 13.400c2-1.800 4.800-1.800 6.800 0" />
            <circle cx="10" cy="16" r="1.300" fill="currentColor" />
          </Line>
        </TrayItem>
        <TrayItem $width={22} aria-label="Volume">
          <Line size={20} w={1.400}>
            <path d="M1 7.500h3l4-4v13l-4-4H1zM11 7.500c1.200 1.500 1.200 3.500 0 5M13.500 5.500c2.300 2.700 2.300 6.300 0 9" />
            <path d="M16.500 3.500c3.200 4 3.200 9 0 13" stroke="#b9adae" />
          </Line>
        </TrayItem>
        <TrayItem $width={38} aria-label="Battery">
          <Line size={21} w={1.500}>
            <path d="M8 5h8.500a1.500 1.500 0 0 1 1.500 1.500v7a1.500 1.500 0 0 1-1.500 1.500h-13A1.500 1.500 0 0 1 2 13.500V10M19.300 8.500v3" />
            <path d="M5 1.500L1.800 6.500h2.500L3.500 10.500 7 5.500H4.800z" fill="currentColor" strokeWidth=".8" />
          </Line>
        </TrayItem>
        <TrayItem $width={89} $align="right"><Lines $align="right"><span>18:39</span><span>21-07-2025</span></Lines></TrayItem>
      </Tray>
    </Taskbar>
  );
}

export default function App() {
  return (
    <Screen>
      <GlobalStyle />
      <BrowserChrome />
      <Body>
        <LoginSidebar />
        <Annotations />
      </Body>
      <SystemTaskbar />
    </Screen>
  );
}
